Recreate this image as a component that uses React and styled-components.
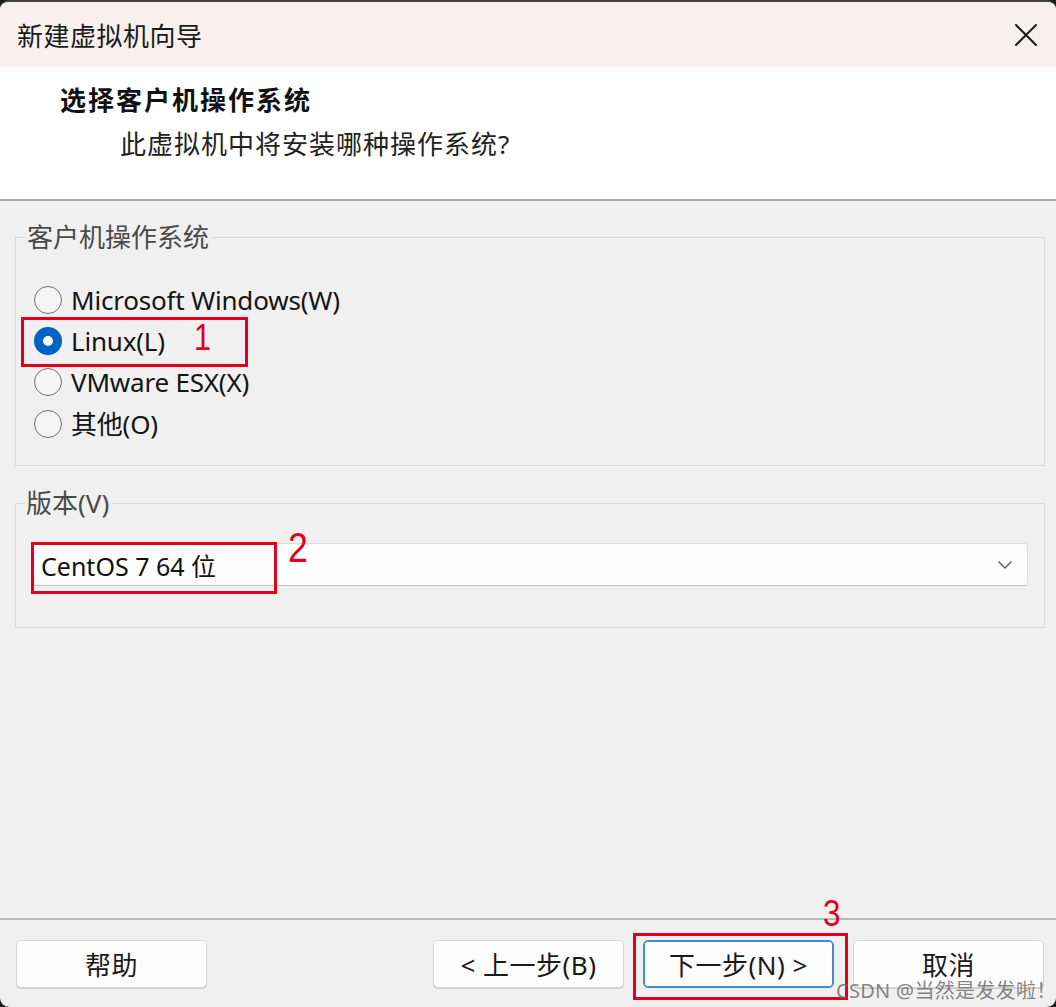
import React from 'react';
import styled, { createGlobalStyle } from 'styled-components';

const GlobalStyle = createGlobalStyle`
  html, body {
    margin: 0;
    padding: 0;
    background: #1c1c1c;
  }
  * {
    box-sizing: border-box;
  }
`;

const FONT = `"Noto Sans", "Noto Sans CJK SC", sans-serif`;

const osOptions = [
  { label: 'Microsoft Windows(W)', checked: false },
  { label: 'Linux(L)', checked: true },
  { label: 'VMware ESX(X)', checked: false },
  { label: '其他(O)', checked: false },
];

const App = () => {
  return (
    <>
      <GlobalStyle />
      <Window>
        <TitleBar>
          <TitleText>新建虚拟机向导</TitleText>
          <CloseButton>
            <svg width="26" height="26" viewBox="0 0 26 26">
              <path d="M3 3 L23 23 M23 3 L3 23" stroke="#1b1b1b" strokeWidth="2" strokeLinecap="round" />
            </svg>
          </CloseButton>
        </TitleBar>

        <Header>
          <Heading>选择客户机操作系统</Heading>
          <SubHeading>此虚拟机中将安装哪种操作系统?</SubHeading>
        </Header>

        <Body>
          <GroupBox>
            <Legend>客户机操作系统</Legend>
            <RadioList>
              {osOptions.map(opt => (
                <RadioRow key={opt.label}>
                  <RadioCircle $checked={opt.checked} />
                  <RadioLabel>{opt.label}</RadioLabel>
                </RadioRow>
              ))}
            </RadioList>
          </GroupBox>

          <GroupBox $tall>
            <Legend>版本(V)</Legend>
            <Select>
              <SelectValue>CentOS 7 64 位</SelectValue>
              <svg width="16" height="10" viewBox="0 0 16 10">
                <path d="M1.5 1.5 L8 8 L14.5 1.5" fill="none" stroke="#5a5a5a" strokeWidth="1.4" />
              </svg>
            </Select>
          </GroupBox>
        </Body>

        <Footer>
          <Button>帮助</Button>
          <Spacer />
          <Button>&lt; 上一步(B)</Button>
          <Button $primary>下一步(N) &gt;</Button>
          <Button>取消</Button>
        </Footer>

        <Mark style={{ left: 21, top: 315, width: 227, height: 50 }} />
        <MarkNumber style={{ left: 194, top: 318 }} $size={36}>1</MarkNumber>
        <Mark style={{ left: 31, top: 540, width: 246, height: 52 }} />
        <MarkNumber style={{ left: 288, top: 525 }} $size={42}>2</MarkNumber>
        <Mark style={{ left: 633, top: 931, width: 215, height: 67 }} />
        <MarkNumber style={{ left: 823, top: 893 }} $size={37}>3</MarkNumber>

        <Watermark>CSDN @当然是发发啦！</Watermark>
      </Window>
    </>
  );
};

const Window = styled.div`
  position: relative;
  width: 1056px;
  height: 1007px;
  display: flex;
  flex-direction: column;
  background: #f0f0f0;
  border-top: 2px solid #444;
  border-radius: 9px;
  overflow: hidden;
  font-family: ${FONT};
  color: #1a1a1a;
`;

const TitleBar = styled.div`
  height: 65px;
  flex-shrink: 0;
  display: flex;
  align-items: center;
  justify-content: space-between;
  padding: 0 15px 0 17px;
  background: #f8efee;
`;

const TitleText = styled.div`
  font-size: 26px;
  letter-spacing: 0.5px;
  color: #1a1a1a;
`;

const CloseButton = styled.div`
  width: 30px;
  height: 30px;
  display: flex;
  align-items: center;
  justify-content: center;
`;

const Header = styled.div`
  height: 134px;
  flex-shrink: 0;
  background: #ffffff;
  padding: 17px 0 0 60px;
  border-bottom: 2px solid #a9a9a9;
`;

const Heading = styled.div`
  font-size: 26px;
  font-weight: 700;
  line-height: 32px;
  letter-spacing: 2px;
  color: #111;
`;

const SubHeading = styled.div`
  margin: 12px 0 0 60px;
  font-size: 26px;
  line-height: 32px;
  letter-spacing: 1px;
  color: #222;
`;

const Body = styled.div`
  flex: 1;
  display: flex;
  flex-direction: column;
  gap: 22px;
  padding: 21px 11px 0 15px;
`;

const GroupBox = styled.fieldset`
  margin: 0;
  padding: ${p => (p.$tall ? '25px 16px 41px 17px' : '27px 16px 21px 18px')};
  border: 1px solid #dadada;
  min-width: 0;
`;

const Legend = styled.legend`
  margin-left: ${p => (p.$offset ?? -8)}px;
  padding: 0 3px 0 1px;
  font-size: 26px;
  line-height: 30px;
  color: #4a4a4a;
`;

const RadioList = styled.div`
  display: flex;
  flex-direction: column;
`;

const RadioRow = styled.div`
  height: 41.3px;
  display: flex;
  align-items: center;
  gap: 9px;
`;

const RadioCircle = styled.span`
  width: 28px;
  height: 28px;
  flex-shrink: 0;
  border-radius: 50%;
  background: ${p => (p.$checked ? '#ffffff' : '#f5f5f5')};
  border: ${p => (p.$checked ? '9px solid #0062c1' : '1.5px solid #6f6f6f')};
`;

const RadioLabel = styled.span`
  font-size: 26px;
  line-height: 34px;
  letter-spacing: -0.2px;
  color: #141414;
`;

const Select = styled.div`
  height: 43px;
  display: flex;
  align-items: center;
  justify-content: space-between;
  padding: 0 14px 0 7px;
  background: #fdfdfd;
  border: 1px solid #dedede;
  border-bottom-color: #c4c4c4;
  border-radius: 3px;
`;

const SelectValue = styled.span`
  font-size: 25px;
  color: #111;
`;

const Footer = styled.div`
  flex-shrink: 0;
  display: flex;
  align-items: center;
  gap: 19px;
  padding: 20px 12px 19px 16px;
  border-top: 2px solid #b8b8b8;
`;

const Spacer = styled.div`
  flex: 1;
`;

const Button = styled.button`
  width: 191px;
  height: 48px;
  display: flex;
  align-items: center;
  justify-content: center;
  background: #fdfdfd;
  border: 1px solid ${p => (p.$primary ? '#3d8bd6' : '#d6d6d6')};
  box-shadow: ${p => (p.$primary ? 'inset 0 0 0 1px #3d8bd6' : '0 1px 0 #c9c9c9')};
  border-radius: 5px;
  font-family: ${FONT};
  font-size: 26px;
  letter-spacing: 0.5px;
  color: #1a1a1a;
  padding: 0;
`;

const Mark = styled.div`
  position: absolute;
  border: 3px solid #e3001b;
  pointer-events: none;
`;

const MarkNumber = styled.div`
  position: absolute;
  font-family: "Liberation Sans", sans-serif;
  font-size: ${p => p.$size}px;
  line-height: 1;
  color: #e3001b;
  transform: scaleX(0.85);
  transform-origin: left top;
`;

const Watermark = styled.div`
  position: absolute;
  left: 836px;
  top: 973px;
  font-family: "Noto Sans", "Noto Sans CJK SC", sans-serif;
  font-size: 20px;
  letter-spacing: 0.3px;
  color: rgba(110, 110, 110, 0.85);
  white-space: nowrap;
`;

export default App;
